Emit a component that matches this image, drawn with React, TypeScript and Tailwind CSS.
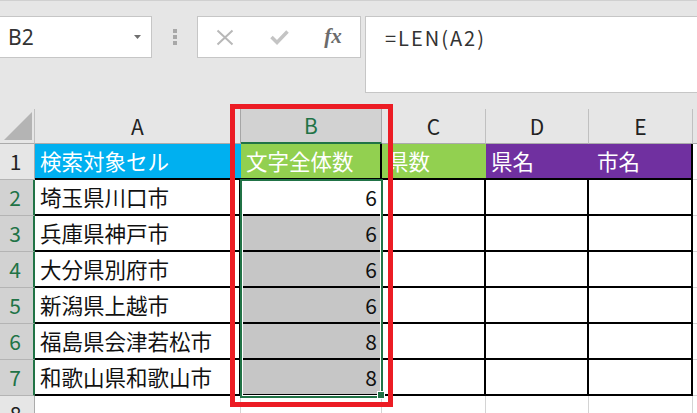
import React from "react";

const rows = [
  { name: "埼玉県川口市", count: "6" },
  { name: "兵庫県神戸市", count: "6" },
  { name: "大分県別府市", count: "6" },
  { name: "新潟県上越市", count: "6" },
  { name: "福島県会津若松市", count: "8" },
  { name: "和歌山県和歌山市", count: "8" },
];

const cellText = "flex items-center overflow-hidden whitespace-nowrap pl-[5px] text-[21.5px] leading-none";

function RowHeader({ n, selected }: { n: number; selected: boolean }) {
  return (
    <div
      className={
        selected
          ? "flex items-center justify-center border-r-2 border-b border-r-[#217346] border-b-[#b4b4b4] bg-[#d2d2d2] pr-[3px] text-[21px] leading-none text-[#217346]"
          : "flex items-center justify-center border-r border-b border-r-[#ababab] border-b-[#b4b4b4] bg-[#e6e6e6] pr-[3px] text-[21px] leading-none text-[#222]"
      }
    >
      {n}
    </div>
  );
}

export default function App() {
  return (
    <div className="relative h-[413px] w-[697px] overflow-hidden bg-[#e6e6e6] font-[family-name:'Noto_Sans_CJK_JP','Noto_Sans',sans-serif]">
      {/* formula bar */}
      <div className="flex h-[109px] items-start border-t border-[#d0d0d0] pt-[15px]">
        <div className="flex h-[42px] w-[152px] items-center justify-between border border-l-0 border-[#c6c6c6] bg-white pl-[8px] pr-[10px]">
          <span className="font-[family-name:'Noto_Sans',sans-serif] text-[21px] leading-none text-[#333]">B2</span>
          <svg width="7" height="4" viewBox="0 0 7 4">
            <path d="M0 0h7L3.5 4z" fill="#6f6f6f" />
          </svg>
        </div>
        <div className="flex h-[42px] w-[45px] flex-col items-center justify-center gap-[2.5px]">
          <span className="h-[3.5px] w-[4px] bg-[#a8a8a8]" />
          <span className="h-[3.5px] w-[4px] bg-[#a8a8a8]" />
          <span className="h-[3.5px] w-[4px] bg-[#a8a8a8]" />
        </div>
        <div className="flex h-[42px] w-[164px] items-center border border-[#c6c6c6] bg-white">
          <div className="flex w-[54px] justify-center">
            <svg width="18" height="17" viewBox="0 0 18 17">
              <path d="M1.5 1.5L16.5 15.5M16.5 1.5L1.5 15.5" stroke="#b8b8b8" strokeWidth="2" fill="none" />
            </svg>
          </div>
          <div className="flex w-[54px] justify-center">
            <svg width="19" height="16" viewBox="0 0 19 16">
              <path d="M1.5 8L7 13.5L17.5 2.5" stroke="#c4c4c4" strokeWidth="3.5" fill="none" />
            </svg>
          </div>
          <div className="flex w-[54px] justify-center pb-[2px] font-[family-name:'Liberation_Serif',serif] text-[21px] font-bold italic leading-none text-[#6b6b6b]">
            fx
          </div>
        </div>
        <div className="ml-[4px] h-[77px] flex-1 border border-r-0 border-[#c6c6c6] bg-white pl-[19px] pt-[11px] text-[20px] leading-none tracking-[2px] text-[#333]">
          =LEN(A2)
        </div>
      </div>

      {/* sheet */}
      <div className="grid grid-cols-[35px_206px_141px_104px_103px_104px_1fr] grid-rows-[35px_repeat(8,36px)]">
        {/* column headers */}
        <div className="flex items-end justify-end border-r border-b border-r-[#c0c0c0] border-b-[#ababab] pr-[2px] pb-[3px]">
          <svg width="29" height="28" viewBox="0 0 29 28">
            <path d="M1 28H29V0z" fill="#b4b4b4" />
          </svg>
        </div>
        <div className="flex items-center justify-center border-r border-b border-r-[#a6a6a6] border-b-[#ababab] text-[21px] leading-none text-[#222]">A</div>
        <div className="flex items-center justify-center border-r border-b-2 border-r-[#a6a6a6] border-b-[#217346] bg-[#d2d2d2] text-[21px] leading-none text-[#217346]">B</div>
        <div className="flex items-center justify-center border-r border-b border-r-[#c0c0c0] border-b-[#ababab] text-[21px] leading-none text-[#222]">C</div>
        <div className="flex items-center justify-center border-r border-b border-r-[#c0c0c0] border-b-[#ababab] text-[21px] leading-none text-[#222]">D</div>
        <div className="flex items-center justify-center border-r border-b border-r-[#c0c0c0] border-b-[#ababab] text-[21px] leading-none text-[#222]">E</div>
        <div className="border-b border-b-[#ababab]" />

        {/* row 1 */}
        <RowHeader n={1} selected={false} />
        <div className={`${cellText} border-b-2 border-b-black bg-[#00b0f0] text-white`}>検索対象セル</div>
        <div className={`${cellText} border-r-2 border-b-2 border-black bg-[#92d050] text-white`}>文字全体数</div>
        <div className={`${cellText} border-b-2 border-b-black bg-[#92d050] text-white`}>県数</div>
        <div className={`${cellText} border-b-2 border-b-black bg-[#7030a0] text-white`}>県名</div>
        <div className={`${cellText} border-r-2 border-b-2 border-black bg-[#7030a0] pl-[8px] text-white`}>市名</div>
        <div className="border-b border-b-[#d4d4d4] bg-white" />

        {/* rows 2-7 */}
        {rows.map((row, i) => (
          <React.Fragment key={row.name}>
            <RowHeader n={i + 2} selected />
            <div className={`${cellText} border-r-2 border-b-2 border-black bg-white text-[#111]`}>{row.name}</div>
            <div
              className={
                i === 0
                  ? "flex items-center justify-end border-r-2 border-b-2 border-black bg-white pr-[3px] text-[21px] leading-none text-[#111]"
                  : "flex items-center justify-end border-r-2 border-b-2 border-black bg-[#c6c6c6] pr-[3px] text-[21px] leading-none text-[#111]"
              }
            >
              {row.count}
            </div>
            <div className="border-r-2 border-b-2 border-black bg-white" />
            <div className="border-r-2 border-b-2 border-black bg-white" />
            <div className="border-r-2 border-b-2 border-black bg-white" />
            <div className="border-b border-b-[#d4d4d4] bg-white" />
          </React.Fragment>
        ))}

        {/* row 8 */}
        <RowHeader n={8} selected={false} />
        <div className="border-r border-r-[#d4d4d4] bg-white" />
        <div className="border-r border-r-[#d4d4d4] bg-white" />
        <div className="border-r border-r-[#d4d4d4] bg-white" />
        <div className="border-r border-r-[#d4d4d4] bg-white" />
        <div className="border-r border-r-[#d4d4d4] bg-white" />
        <div className="bg-white" />
      </div>

      {/* selection range B2:B7 */}
      <div className="absolute left-[240px] top-[179px] h-[219px] w-[143px] border-2 border-[#217346] shadow-[inset_0_0_0_1px_#fff]" />
      <div className="absolute left-[377px] top-[391px] h-[8px] w-[8px] border border-white bg-[#217346]" />

      {/* red highlight */}
      <div className="absolute left-[230px] top-[104px] h-[303px] w-[163px] border-[5px] border-[#ec1c24]" />
    </div>
  );
}
